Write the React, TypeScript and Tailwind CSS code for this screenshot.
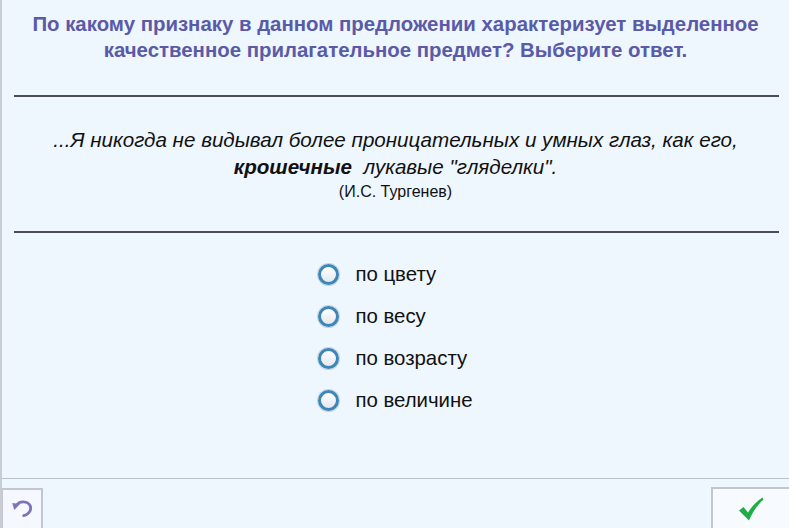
const options = ["по цвету", "по весу", "по возрасту", "по величине"];

function Radio() {
  return (
    <span className="block h-[21px] w-[21px] rounded-full border-[3px] border-[#3d86b8] bg-gradient-to-b from-[#ffffff] to-[#e3e8ee] shadow-[0_0_0_1px_#c9d3dc]" />
  );
}

export default function App() {
  return (
    <div
      className="flex h-[528px] w-[789px] flex-col overflow-hidden border-l-2 border-[#c8ccd4] bg-[#eef6fe]"
      style={{ fontFamily: '"Liberation Sans", Arial, sans-serif' }}
    >
      <div className="flex h-[479px] flex-col border-b border-[#b9c2cb]">
        <h1 className="pt-[11px] text-center text-[20.4px] font-bold leading-[26px] whitespace-nowrap text-[#5a5aa8]">
          По какому признаку в данном предложении характеризует выделенное
          <br />
          качественное прилагательное предмет? Выберите ответ.
        </h1>
        <div className="ml-[12px] mr-[10px] mt-[32px] h-[2px] bg-[#4b4d52]" />

        <div className="pt-[29px] text-center text-[20.6px] leading-[27px] text-[#111]">
          <p className="italic">...Я никогда не видывал более проницательных и умных глаз, как его,</p>
          <p>
            <b className="italic">крошечные</b>
            <span className="italic">&nbsp; лукавые "гляделки".</span>
          </p>
          <p className="text-[16px] leading-[24px]">(И.С. Тургенев)</p>
        </div>
        <div className="ml-[12px] mr-[10px] mt-[27px] h-[2px] bg-[#4b4d52]" />

        <div className="flex flex-col items-center pt-[31px]">
          <div className="flex flex-col gap-[22px]">
            {options.map((o) => (
              <label key={o} className="flex h-[20px] items-center gap-[16px] text-[20.4px] text-[#111]">
                <Radio />
                <span>{o}</span>
              </label>
            ))}
          </div>
        </div>
      </div>

      <div className="flex flex-1 items-end justify-between">
        <button className="flex h-[40px] w-[41px] items-center justify-center border-t-2 border-r-2 border-l border-[#c3c6cc] bg-[#f5f9ff]">
          <svg width="24" height="22" viewBox="0 0 22 20">
            <path d="M6.5 6 C9 2.5 16 2.5 18.5 7 C20 11 17 15.5 12.5 16" fill="none" stroke="#7b74b8" strokeWidth="2.6" strokeLinecap="round" />
            <path d="M2 4.5 L9 5.5 L4 11 Z" fill="#7b74b8" />
          </svg>
        </button>
        <button className="flex h-[41px] w-[78px] items-center justify-center border-t-2 border-l-2 border-[#c3c6cc] bg-[#f7fbff]">
          <svg width="26" height="24" viewBox="0 0 26 24">
            <path d="M1 13.5 L5.5 10 L10 15.5 C14 9 19 4 24.5 0.5 L25.5 2.5 C20 7.5 15 14 11 23.5 Z" fill="#1fae45" />
          </svg>
        </button>
      </div>
    </div>
  );
}
